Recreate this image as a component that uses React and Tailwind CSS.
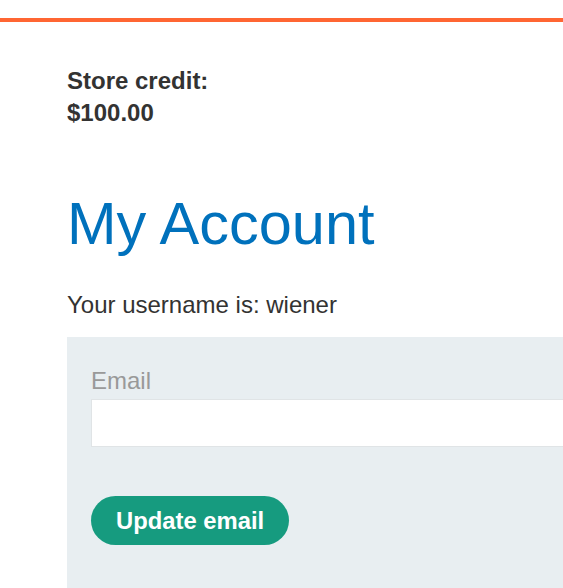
export default function App() {
  return (
    <div
      className="w-full h-[588px] overflow-hidden bg-white text-[#333332]"
      style={{ fontFamily: '"Liberation Sans", Arial, sans-serif' }}
    >
      <div className="h-[18px]" />
      <div className="h-[4px] bg-[#ff6633]" />
      <div className="pl-[67px]">
        <div className="mt-[43px] text-[24px] leading-[32px] font-bold">
          <div>Store credit:</div>
          <div>$100.00</div>
        </div>
        <h1 className="mt-[59px] text-[59.5px] leading-[72px] text-[#0071bc] font-normal">
          My Account
        </h1>
        <p className="mt-[29px] text-[24px] leading-[32px]">Your username is: wiener</p>
        <div className="mt-[16px] bg-[#e8eef1] pl-[24px] pt-[28px] h-[400px] overflow-hidden">
          <label className="block text-[24px] leading-[32px] text-[#999999]">Email</label>
          <input
            type="text"
            className="mt-[2px] block w-[520px] h-[48px] bg-white border border-[#e0e4e6] outline-none"
          />
          <button className="mt-[49px] h-[49px] px-[25px] rounded-full bg-[#169b7f] text-white font-bold text-[23.8px] leading-none">
            Update email
          </button>
        </div>
      </div>
    </div>
  );
}
